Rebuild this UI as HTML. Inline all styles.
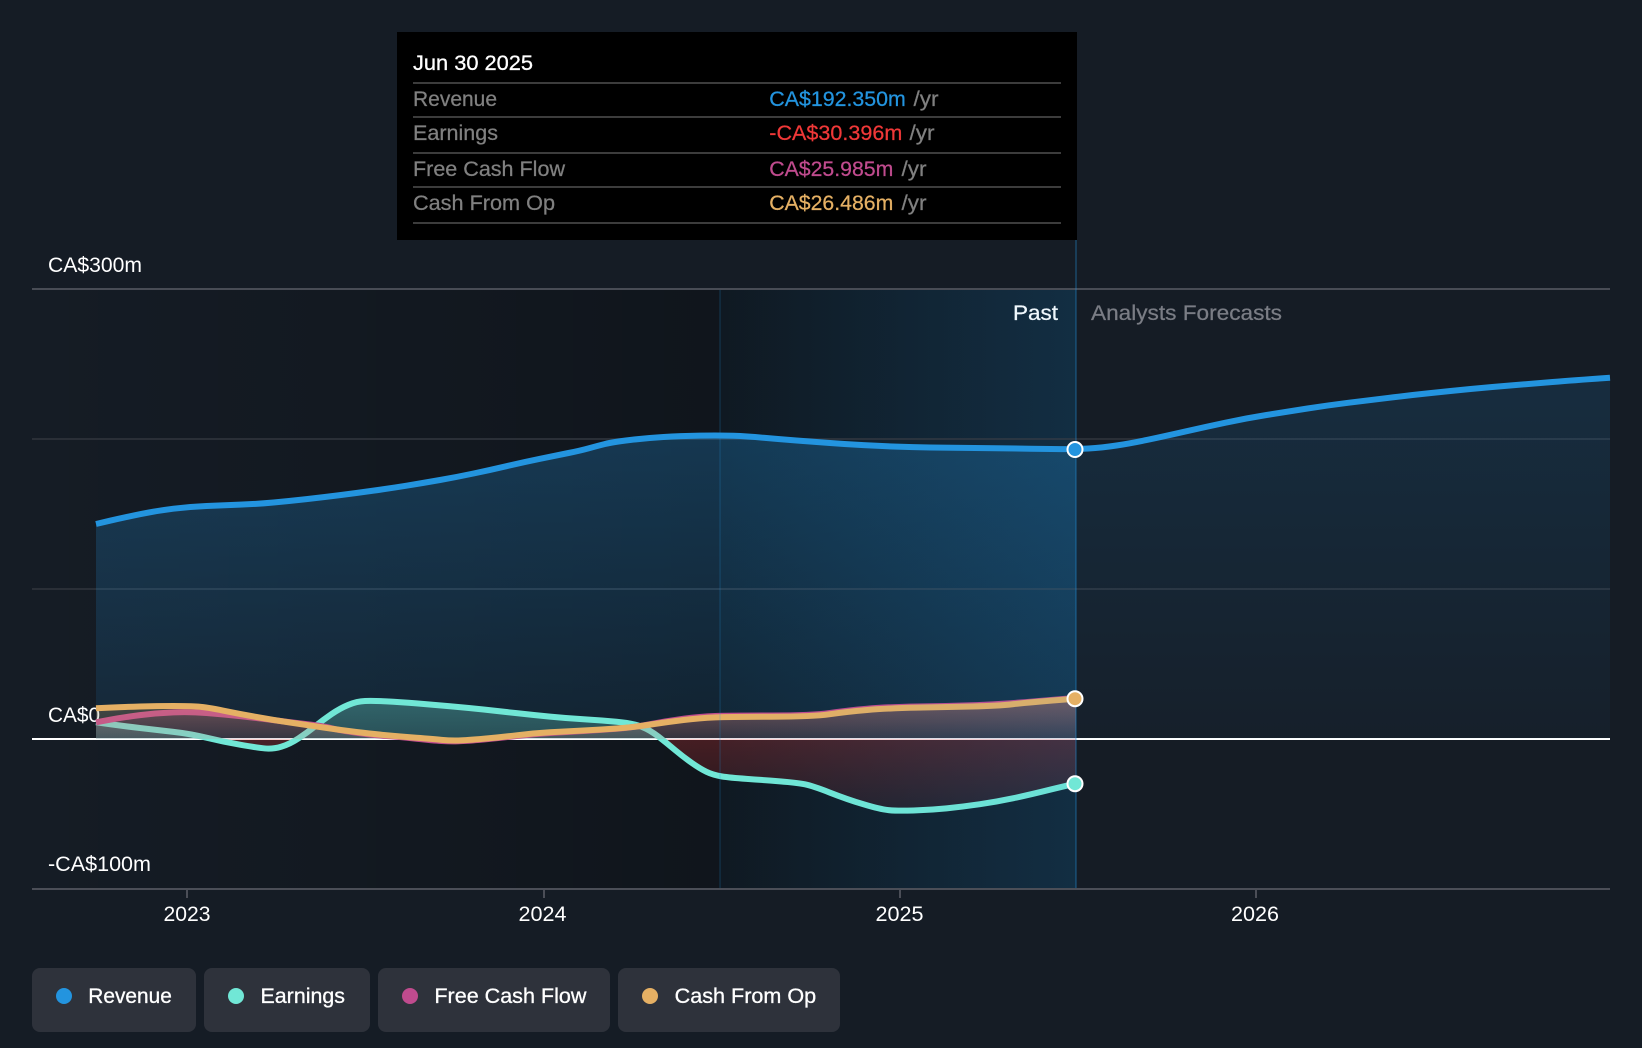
<!DOCTYPE html>
<html><head><meta charset="utf-8"><style>
html,body{margin:0;padding:0;background:#151c25;width:1642px;height:1048px;overflow:hidden}
svg{display:block}
text{font-family:"Liberation Sans",sans-serif;font-size:21px}
</style></head><body>
<svg width="1642" height="1048" viewBox="0 0 1642 1048" xmlns="http://www.w3.org/2000/svg">
<defs>
<linearGradient id="revP" gradientUnits="userSpaceOnUse" x1="0" y1="435" x2="0" y2="739"><stop offset="0" stop-color="#2394df" stop-opacity=".27"/><stop offset="1" stop-color="#2394df" stop-opacity=".1"/></linearGradient>
<linearGradient id="revF" gradientUnits="userSpaceOnUse" x1="0" y1="380" x2="0" y2="739"><stop offset="0" stop-color="#2394df" stop-opacity=".14"/><stop offset="1" stop-color="#2394df" stop-opacity=".03"/></linearGradient>
<linearGradient id="teal" gradientUnits="userSpaceOnUse" x1="0" y1="700" x2="0" y2="739"><stop offset="0" stop-color="#71e7d6" stop-opacity=".32"/><stop offset="1" stop-color="#71e7d6" stop-opacity=".22"/></linearGradient>
<linearGradient id="red" gradientUnits="userSpaceOnUse" x1="0" y1="739" x2="0" y2="812"><stop offset="0" stop-color="#f03838" stop-opacity=".24"/><stop offset="1" stop-color="#f03838" stop-opacity=".08"/></linearGradient>
<linearGradient id="pink" gradientUnits="userSpaceOnUse" x1="0" y1="700" x2="0" y2="739"><stop offset="0" stop-color="#c04b8e" stop-opacity=".3"/><stop offset="1" stop-color="#c04b8e" stop-opacity=".1"/></linearGradient>
<linearGradient id="orange" gradientUnits="userSpaceOnUse" x1="0" y1="700" x2="0" y2="739"><stop offset="0" stop-color="#e5b064" stop-opacity=".25"/><stop offset="1" stop-color="#e5b064" stop-opacity=".08"/></linearGradient>
<linearGradient id="bandL" x1="0" y1="0" x2="1" y2="0"><stop offset="0" stop-color="#000" stop-opacity="0"/><stop offset="1" stop-color="#000" stop-opacity=".25"/></linearGradient>
<linearGradient id="bandB" x1="0" y1="0" x2="1" y2="0"><stop offset="0" stop-color="#0f1922"/><stop offset="1" stop-color="#112535"/></linearGradient>
<linearGradient id="bandP" x1="0" y1="0" x2="1" y2="0"><stop offset="0" stop-color="#2394df" stop-opacity="0"/><stop offset="1" stop-color="#2394df" stop-opacity=".08"/></linearGradient>
<clipPath id="above"><rect x="90" y="600" width="1000" height="139"/></clipPath>
<clipPath id="below"><rect x="90" y="739" width="1000" height="100"/></clipPath>
</defs>

<rect width="1642" height="1048" fill="#151c25"/>

<!-- region backgrounds -->
<rect x="32" y="290" width="688" height="598" fill="url(#bandL)"/>
<rect x="720" y="290" width="356" height="598" fill="url(#bandB)"/>

<!-- grid -->
<rect x="32" y="288" width="1578" height="2" fill="#484c55"/>
<rect x="32" y="438" width="1578" height="2" fill="#2a2f37"/>
<rect x="32" y="588" width="1578" height="2" fill="#2a2f37"/>
<rect x="32" y="888" width="1578" height="2" fill="#4b4e57"/>
<rect x="186" y="889" width="2" height="9" fill="#4b4e57"/>
<rect x="543" y="889" width="2" height="9" fill="#4b4e57"/>
<rect x="899" y="889" width="2" height="9" fill="#4b4e57"/>
<rect x="1255" y="889" width="2" height="9" fill="#4b4e57"/>

<!-- axis labels -->
<g fill="#fff">
<text x="48" y="272" textLength="94" lengthAdjust="spacingAndGlyphs">CA$300m</text>
<text x="48" y="722" textLength="52" lengthAdjust="spacingAndGlyphs">CA$0</text>
<text x="48" y="871" textLength="103" lengthAdjust="spacingAndGlyphs">-CA$100m</text>
<text x="163.500" y="921" textLength="47" lengthAdjust="spacingAndGlyphs">2023</text>
<text x="518.500" y="921" textLength="48" lengthAdjust="spacingAndGlyphs">2024</text>
<text x="875.500" y="921" textLength="48" lengthAdjust="spacingAndGlyphs">2025</text>
<text x="1231" y="921" textLength="48" lengthAdjust="spacingAndGlyphs">2026</text>
<text x="1013" y="320" textLength="45" lengthAdjust="spacingAndGlyphs" stroke="#fff" stroke-width=".25">Past</text>
</g>
<text x="1091" y="320" fill="#7a7d85" stroke="#7a7d85" stroke-width=".25" textLength="191" lengthAdjust="spacingAndGlyphs">Analysts Forecasts</text>

<!-- zero line -->
<rect x="32" y="738" width="1578" height="2" fill="#fff"/>

<!-- revenue -->
<path fill="url(#revP)" d="M96,524 L109.5,520.85 Q123,517.7 140,514.2 Q157,510.7 173.5,508.7 Q190,506.7 206.5,506 Q223,505.3 240,504.65 Q257,504 273.5,502.5 Q290,501 306.5,499.15 Q323,497.3 340,495.15 Q357,493 373.5,490.65 Q390,488.3 406.5,485.65 Q423,483 440,480 Q457,477 473.5,473.5 Q490,470 506.5,466.15 Q523,462.3 540,458.8 Q557,455.3 568.5,453 Q580,450.7 588.5,448.35 Q597,446 605,444 Q613,442 630,440 Q647,438 663.5,437 Q680,436 700,435.65 Q720,435.3 733.5,435.8 Q747,436.3 763.5,437.8 Q780,439.3 796.5,440.5 Q813,441.7 830,443 Q847,444.3 863.5,445.15 Q880,446 896.5,446.65 Q913,447.3 930,447.5 Q947,447.7 963.5,447.85 Q980,448 996.5,448.25 Q1013,448.5 1030,448.75 Q1047,449 1061,449.15 L1076,449.3 L1076,739 L96,739 Z"/>
<path fill="url(#revF)" d="M1076,449.3 L1088.5,448.5 Q1102,447.7 1116.5,445.5 Q1131,443.3 1147.5,439.8 Q1164,436.3 1184.5,431.65 Q1205,427 1225.5,422.65 Q1246,418.3 1266.5,415 Q1287,411.7 1307.5,408.5 Q1328,405.3 1348,402.8 Q1368.5,400.3 1389,397.8 Q1409.5,395.3 1430,393.15 Q1450,391 1470.5,389 Q1491,387 1511.5,385.35 Q1532,383.7 1552.5,382 Q1573,380.3 1610,377.7 L1610,739 L1076,739 Z"/>
<path fill="none" stroke="#2394df" stroke-width="6" stroke-linejoin="round" d="M96,524 L109.5,520.85 Q123,517.7 140,514.2 Q157,510.7 173.5,508.7 Q190,506.7 206.5,506 Q223,505.3 240,504.65 Q257,504 273.5,502.5 Q290,501 306.5,499.15 Q323,497.3 340,495.15 Q357,493 373.5,490.65 Q390,488.3 406.5,485.65 Q423,483 440,480 Q457,477 473.5,473.5 Q490,470 506.5,466.15 Q523,462.3 540,458.8 Q557,455.3 568.5,453 Q580,450.7 588.5,448.35 Q597,446 605,444 Q613,442 630,440 Q647,438 663.5,437 Q680,436 700,435.65 Q720,435.3 733.5,435.8 Q747,436.3 763.5,437.8 Q780,439.3 796.5,440.5 Q813,441.7 830,443 Q847,444.3 863.5,445.15 Q880,446 896.5,446.65 Q913,447.3 930,447.5 Q947,447.7 963.5,447.85 Q980,448 996.5,448.25 Q1013,448.5 1030,448.75 Q1047,449 1061,449.15 Q1075,449.3 1088.5,448.5 Q1102,447.7 1116.5,445.5 Q1131,443.3 1147.5,439.8 Q1164,436.3 1184.5,431.65 Q1205,427 1225.5,422.65 Q1246,418.3 1266.5,415 Q1287,411.7 1307.5,408.5 Q1328,405.3 1348,402.8 Q1368.5,400.3 1389,397.8 Q1409.5,395.3 1430,393.15 Q1450,391 1470.5,389 Q1491,387 1511.5,385.35 Q1532,383.7 1552.5,382 Q1573,380.3 1610,377.7"/>

<!-- earnings -->
<path clip-path="url(#above)" fill="url(#teal)" d="M96,722.3 L109.5,724.15 Q123,726 140,728 Q157,730 173.5,731.85 Q190,733.7 206.5,737.7 Q223,741.7 240,744.7 Q257,747.7 265,748.45 Q273,749.2 281.5,746.6 Q290,744 298.5,738.35 Q307,732.7 315,726.35 Q323,720 331.5,714.15 Q340,708.3 348.5,704.8 Q357,701.3 365,701 Q373,700.7 386.5,701.35 Q400,702 416.5,703.35 Q433,704.7 450,706.2 Q467,707.7 483.5,709.5 Q500,711.3 516.5,713.15 Q533,715 550,716.65 Q567,718.3 583.5,719.3 Q600,720.3 616.5,721.8 Q633,723.3 641.5,726.65 Q650,730 658.5,736.65 Q667,743.3 675,750 L675,739 L96,739 Z"/>
<path clip-path="url(#below)" fill="url(#red)" d="M96,722.3 L109.5,724.15 Q123,726 140,728 Q157,730 173.5,731.85 Q190,733.7 206.5,737.7 Q223,741.7 240,744.7 Q257,747.7 265,748.45 Q273,749.2 281.5,746.6 Q290,744 298.5,738.35 Q307,732.7 315,726.35 L315,739 L640,739 L640,726 Q650,730 658.5,736.65 Q667,743.3 675,750 Q683,756.7 691.5,762.7 Q700,768.7 706.5,771.85 Q713,775 721.5,776.35 Q730,777.7 746.5,778.85 Q763,780 780,781.35 Q797,782.7 805,784.35 Q813,786 830,792.65 Q847,799.3 863.5,804.3 Q880,809.3 888.5,810.15 Q897,811 913.5,810.5 Q930,810 946.5,808.35 Q963,806.7 980,804.2 Q997,801.7 1013.5,798.2 Q1030,794.7 1052,789.2 L1076,783.7 L1076,739 L96,739 Z"/>
<path fill="none" stroke="#71e7d6" stroke-width="6" stroke-linejoin="round" d="M96,722.3 L109.5,724.15 Q123,726 140,728 Q157,730 173.5,731.85 Q190,733.7 206.5,737.7 Q223,741.7 240,744.7 Q257,747.7 265,748.45 Q273,749.2 281.5,746.6 Q290,744 298.5,738.35 Q307,732.7 315,726.35 Q323,720 331.5,714.15 Q340,708.3 348.5,704.8 Q357,701.3 365,701 Q373,700.7 386.5,701.35 Q400,702 416.5,703.35 Q433,704.7 450,706.2 Q467,707.7 483.5,709.5 Q500,711.3 516.5,713.15 Q533,715 550,716.65 Q567,718.3 583.5,719.3 Q600,720.3 616.5,721.8 Q633,723.3 641.5,726.65 Q650,730 658.5,736.65 Q667,743.3 675,750 Q683,756.7 691.5,762.7 Q700,768.7 706.5,771.85 Q713,775 721.5,776.35 Q730,777.7 746.5,778.85 Q763,780 780,781.35 Q797,782.7 805,784.35 Q813,786 830,792.65 Q847,799.3 863.5,804.3 Q880,809.3 888.5,810.15 Q897,811 913.5,810.5 Q930,810 946.5,808.35 Q963,806.7 980,804.2 Q997,801.7 1013.5,798.2 Q1030,794.7 1052,789.2 L1075,783.7"/>

<!-- free cash flow -->
<path clip-path="url(#above)" fill="url(#pink)" d="M96,722.3 L109.5,719.8 Q123,717.3 140,715.15 Q157,713 173.5,712.35 Q190,711.7 206.5,713 Q223,714.3 240,716.15 Q257,718 273.5,720.15 Q290,722.3 306.5,724.15 Q323,726 331.5,728.25 Q340,730.5 356.5,732.75 Q373,735 386.5,736 Q400,737 416.5,738.75 Q433,740.5 441.5,741 Q450,741.5 458.5,741.25 Q467,741 483.5,739.5 Q500,738 516.5,736 Q533,734 550,733 Q567,732 583.5,731 Q600,730 616.5,728.75 Q633,727.5 650,724.25 Q667,721 683.5,718.75 Q700,716.5 715,716 Q730,715.5 771.5,715.5 Q813,715.5 830,713 Q847,710.5 867,708.75 Q887,707 917,706.5 Q947,706 972,705.25 Q997,704.5 1036,701.25 L1076,698 L1076,739 L96,739 Z"/>
<path fill="none" stroke="#c04b8e" stroke-width="6" stroke-linejoin="round" d="M96,722.3 L109.5,719.8 Q123,717.3 140,715.15 Q157,713 173.5,712.35 Q190,711.7 206.5,713 Q223,714.3 240,716.15 Q257,718 273.5,720.15 Q290,722.3 306.5,724.15 Q323,726 331.5,728.25 Q340,730.5 356.5,732.75 Q373,735 386.5,736 Q400,737 416.5,738.75 Q433,740.5 441.5,741 Q450,741.5 458.5,741.25 Q467,741 483.5,739.5 Q500,738 516.5,736 Q533,734 550,733 Q567,732 583.5,731 Q600,730 616.5,728.75 Q633,727.5 650,724.25 Q667,721 683.5,718.75 Q700,716.5 715,716 Q730,715.5 771.5,715.5 Q813,715.5 830,713 Q847,710.5 867,708.75 Q887,707 917,706.5 Q947,706 972,705.25 Q997,704.5 1036,701.25 L1075,698"/>

<!-- cash from op -->
<path clip-path="url(#above)" fill="url(#orange)" d="M96,708.3 L109.5,707.65 Q123,707 140,706.5 Q157,706 173.5,706 Q190,706 198.5,706.65 Q207,707.3 223.5,710.65 Q240,714 256.5,717 Q273,720 290,722.5 Q307,725 323.5,727.5 Q340,730 356.5,732 Q373,734 386.5,735.25 Q400,736.5 416.5,737.75 Q433,739 441.5,739.85 Q450,740.7 458.5,740.5 Q467,740.3 483.5,738.8 Q500,737.3 516.5,735.3 Q533,733.3 550,732.3 Q567,731.3 583.5,730.5 Q600,729.7 616.5,728.5 Q633,727.3 650,724.65 Q667,722 683.5,720 Q700,718 715,717.35 Q730,716.7 771.5,716.7 Q813,716.7 830,714.2 Q847,711.7 867,710 Q887,708.3 917,707.65 Q947,707 972,706.5 Q997,706 1013.5,704.15 Q1030,702.3 1052.5,700.5 L1076,698.7 L1076,739 L96,739 Z"/>
<path fill="none" stroke="#e5b064" stroke-width="6" stroke-linejoin="round" d="M96,708.3 L109.5,707.65 Q123,707 140,706.5 Q157,706 173.5,706 Q190,706 198.5,706.65 Q207,707.3 223.5,710.65 Q240,714 256.5,717 Q273,720 290,722.5 Q307,725 323.5,727.5 Q340,730 356.5,732 Q373,734 386.5,735.25 Q400,736.5 416.5,737.75 Q433,739 441.5,739.85 Q450,740.7 458.5,740.5 Q467,740.3 483.5,738.8 Q500,737.3 516.5,735.3 Q533,733.3 550,732.3 Q567,731.3 583.5,730.5 Q600,729.7 616.5,728.5 Q633,727.3 650,724.65 Q667,722 683.5,720 Q700,718 715,717.35 Q730,716.7 771.5,716.7 Q813,716.7 830,714.2 Q847,711.7 867,710 Q887,708.3 917,707.65 Q947,707 972,706.5 Q997,706 1013.5,704.15 Q1030,702.3 1052.5,700.5 L1075,698.7"/>

<!-- past overlay -->
<rect x="720" y="290" width="356" height="598" fill="url(#bandP)"/>
<rect x="719" y="290" width="2" height="598" fill="#2394df" fill-opacity=".14"/>
<rect x="1075" y="240" width="2" height="648" fill="#2394df" fill-opacity=".28"/>

<!-- dots -->
<circle cx="1075" cy="449.5" r="7.5" fill="#2394df" stroke="#fff" stroke-width="2"/>
<circle cx="1075" cy="698.7" r="7.5" fill="#e5b064" stroke="#fff" stroke-width="2"/>
<circle cx="1075" cy="783.7" r="7.5" fill="#71e7d6" stroke="#fff" stroke-width="2"/>

<!-- tooltip -->
<rect x="397" y="32" width="680" height="208" fill="#000"/>
<text x="413" y="70" fill="#fff" stroke="#fff" stroke-width=".3" textLength="120" lengthAdjust="spacingAndGlyphs">Jun 30 2025</text>
<g fill="#3c3c3c">
<rect x="413" y="82" width="648" height="2"/>
<rect x="413" y="116" width="648" height="2"/>
<rect x="413" y="152" width="648" height="2"/>
<rect x="413" y="186" width="648" height="2"/>
<rect x="413" y="222" width="648" height="2"/>
</g>
<g fill="#808080" stroke="#808080" stroke-width=".25">
<text x="413" y="106" textLength="84" lengthAdjust="spacingAndGlyphs">Revenue</text>
<text x="413" y="140" textLength="85" lengthAdjust="spacingAndGlyphs">Earnings</text>
<text x="413" y="176" textLength="152" lengthAdjust="spacingAndGlyphs">Free Cash Flow</text>
<text x="413" y="210" textLength="142" lengthAdjust="spacingAndGlyphs">Cash From Op</text>
<text x="913.5" y="106" textLength="25" lengthAdjust="spacingAndGlyphs">/yr</text>
<text x="909.5" y="140" textLength="25" lengthAdjust="spacingAndGlyphs">/yr</text>
<text x="901.5" y="176" textLength="25" lengthAdjust="spacingAndGlyphs">/yr</text>
<text x="901.5" y="210" textLength="25" lengthAdjust="spacingAndGlyphs">/yr</text>
</g>
<text x="769.3" y="106" fill="#2394df" stroke="#2394df" stroke-width=".25" textLength="136.5" lengthAdjust="spacingAndGlyphs">CA$192.350m</text>
<text x="769.3" y="140" fill="#f03838" stroke="#f03838" stroke-width=".25" textLength="133" lengthAdjust="spacingAndGlyphs">-CA$30.396m</text>
<text x="769.3" y="176" fill="#c04b8e" stroke="#c04b8e" stroke-width=".25" textLength="124" lengthAdjust="spacingAndGlyphs">CA$25.985m</text>
<text x="769.3" y="210" fill="#e5b064" stroke="#e5b064" stroke-width=".25" textLength="124" lengthAdjust="spacingAndGlyphs">CA$26.486m</text>

<!-- legend -->
<g fill="#2e323b">
<rect x="32" y="968" width="164" height="64" rx="8"/>
<rect x="204" y="968" width="166" height="64" rx="8"/>
<rect x="378" y="968" width="232" height="64" rx="8"/>
<rect x="618" y="968" width="222" height="64" rx="8"/>
</g>
<circle cx="64" cy="996" r="8" fill="#2394df"/>
<circle cx="236" cy="996" r="8" fill="#71e7d6"/>
<circle cx="410" cy="996" r="8" fill="#c04b8e"/>
<circle cx="650" cy="996" r="8" fill="#e5b064"/>
<g fill="#fff" stroke="#fff" stroke-width=".3">
<text x="88.3" y="1003" textLength="83.5" lengthAdjust="spacingAndGlyphs">Revenue</text>
<text x="260.5" y="1003" textLength="84.5" lengthAdjust="spacingAndGlyphs">Earnings</text>
<text x="434.4" y="1003" textLength="152" lengthAdjust="spacingAndGlyphs">Free Cash Flow</text>
<text x="674.7" y="1003" textLength="141.5" lengthAdjust="spacingAndGlyphs">Cash From Op</text>
</g>
</svg>
</body></html>
